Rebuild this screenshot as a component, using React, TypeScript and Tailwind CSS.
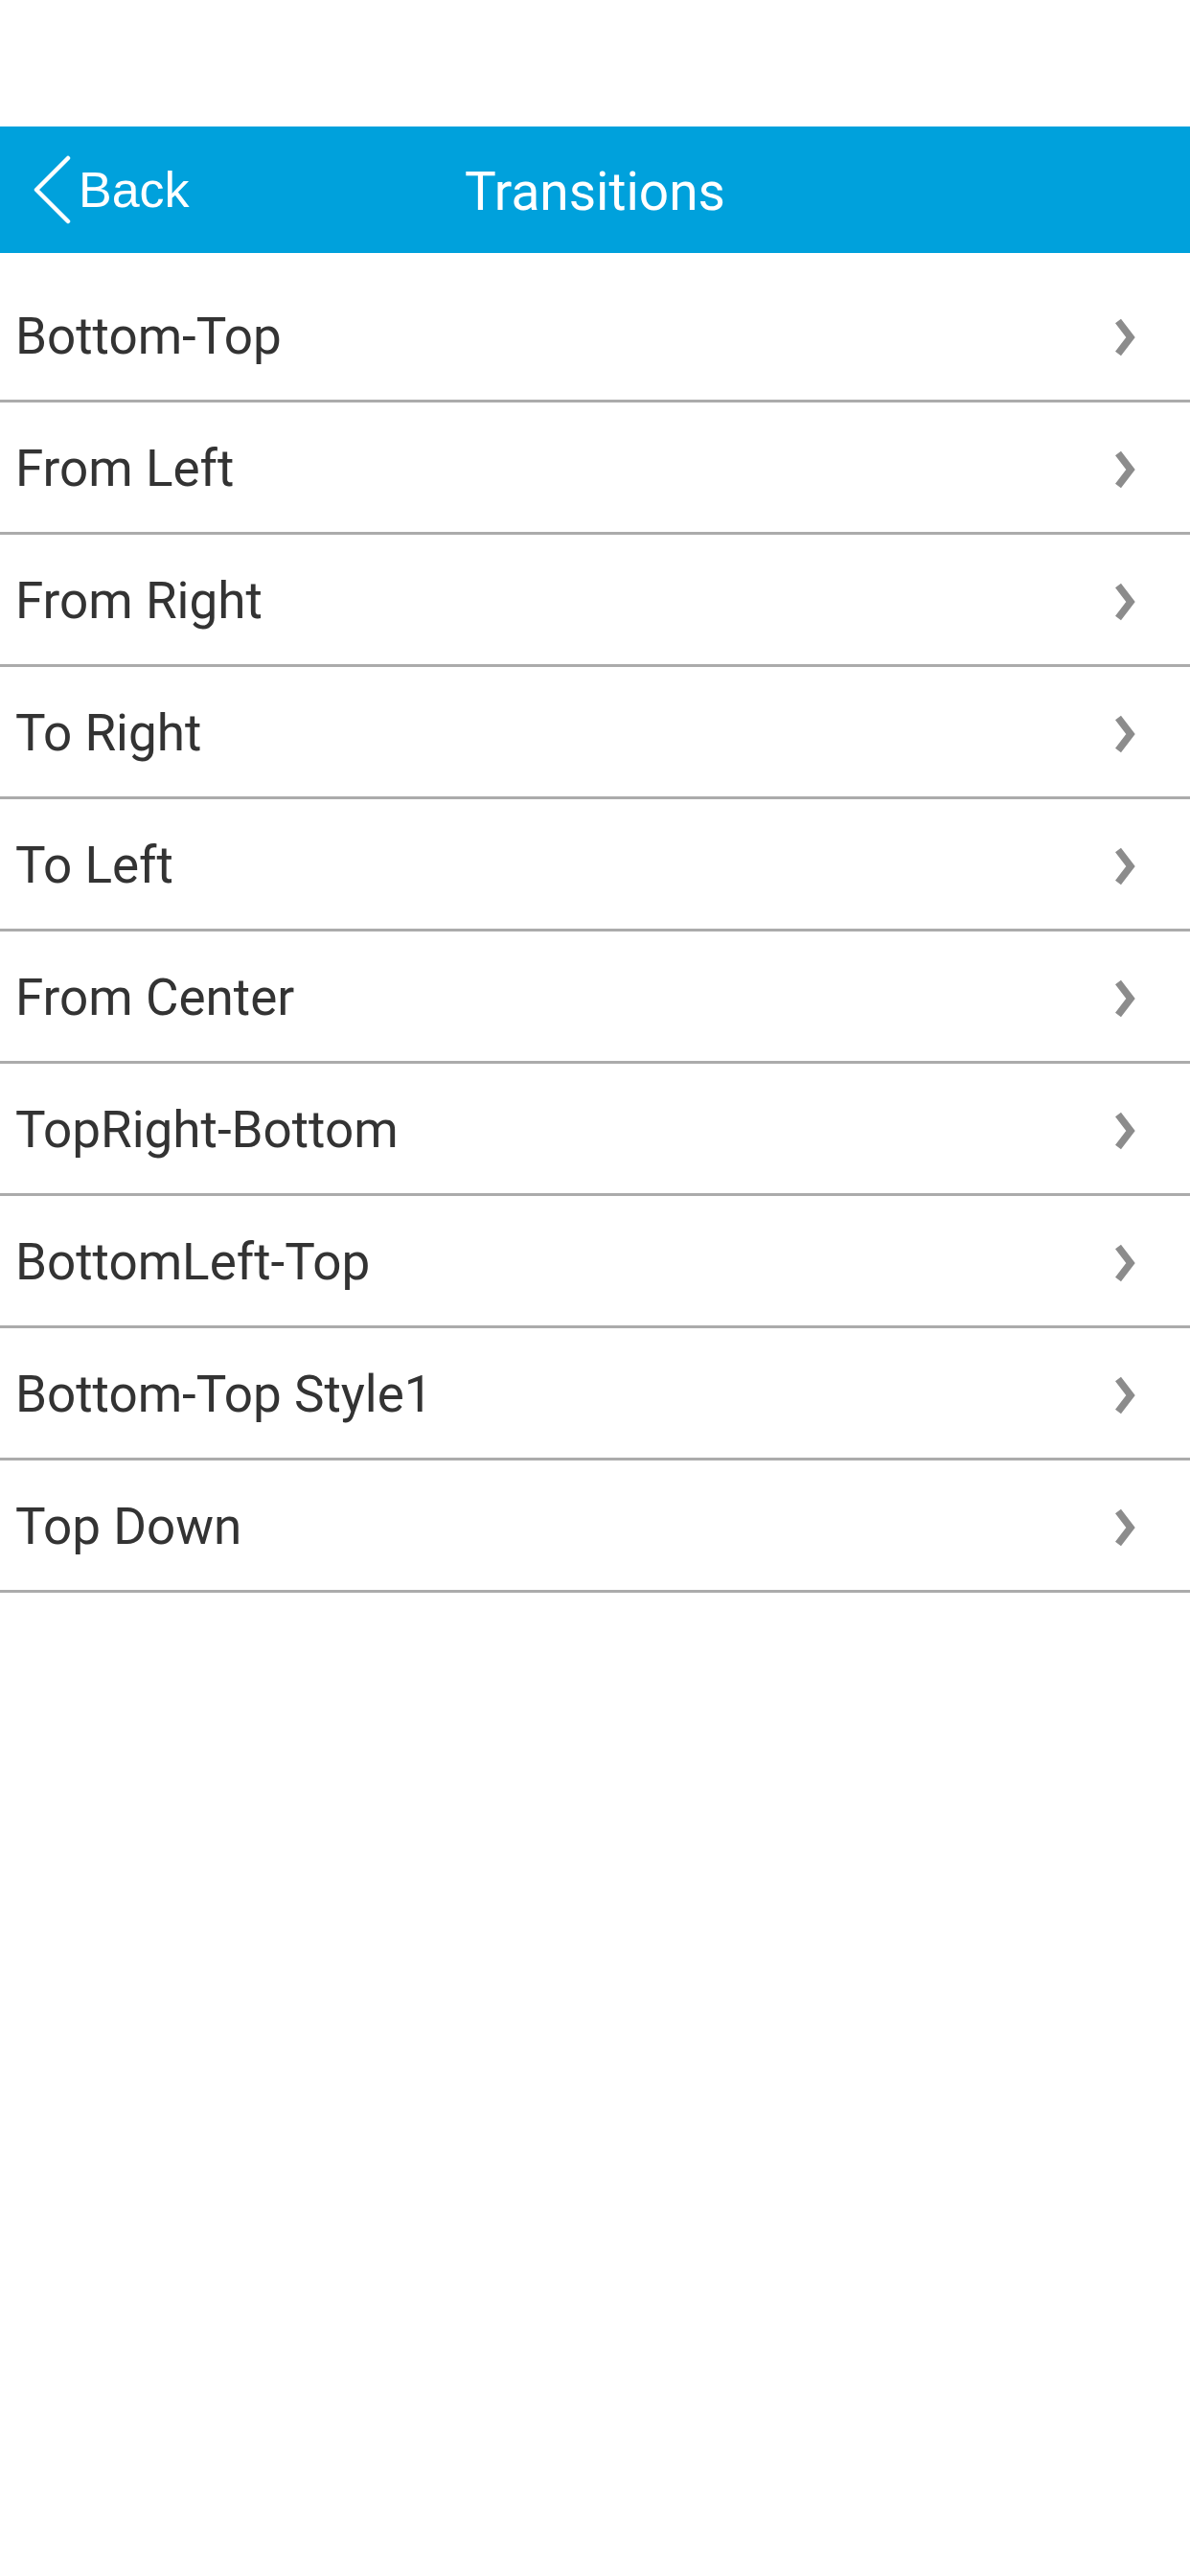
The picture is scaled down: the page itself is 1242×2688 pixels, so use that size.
import { useState } from "react";

const items = [
  "Bottom-Top",
  "From Left",
  "From Right",
  "To Right",
  "To Left",
  "From Center",
  "TopRight-Bottom",
  "BottomLeft-Top",
  "Bottom-Top Style1",
  "Top Down",
];

const Chevron = () => (
  <svg width="22" height="40" viewBox="0 0 22 40" className="shrink-0">
    <polyline
      points="4,3 17,20 4,37"
      fill="none"
      stroke="#8c8c8c"
      strokeWidth="7.5"
      strokeLinejoin="miter"
    />
  </svg>
);

export default function App() {
  const [selected, setSelected] = useState<string | null>(null);

  return (
    <div className="min-h-[2688px] w-[1242px] bg-white font-['Roboto',sans-serif]">
      {/* status bar space */}
      <div className="h-[132px]" />

      {/* Nav bar */}
      <div className="relative flex h-[132px] items-center bg-[#00a1dc]">
        <button className="flex items-center pl-[33px] text-white">
          <svg width="42" height="72" viewBox="0 0 42 72">
            <polyline
              points="38,3 5,36 38,69"
              fill="none"
              stroke="white"
              strokeWidth="4.5"
              strokeLinecap="round"
              strokeLinejoin="round"
            />
          </svg>
          <span className="ml-[7px] font-['Liberation_Sans',Arial,sans-serif] text-[52px] leading-none">
            Back
          </span>
        </button>
        <h1 className="pointer-events-none absolute inset-x-0 top-1/2 -translate-y-1/2 pt-[4px] text-center text-[55px] leading-none text-white">
          Transitions
        </h1>
      </div>

      {/* List */}
      <ul className="pt-[18px]">
        {items.map((item) => (
          <li
            key={item}
            onClick={() => setSelected(item)}
            className={`flex h-[138px] items-center justify-between border-b-[3px] border-[#ababab] pl-[16px] pr-[57px] pt-[4px] ${
              selected === item ? "bg-gray-100" : ""
            }`}
          >
            <span className="text-[53px] leading-none text-[#333333]">{item}</span>
            <Chevron />
          </li>
        ))}
      </ul>
    </div>
  );
}
